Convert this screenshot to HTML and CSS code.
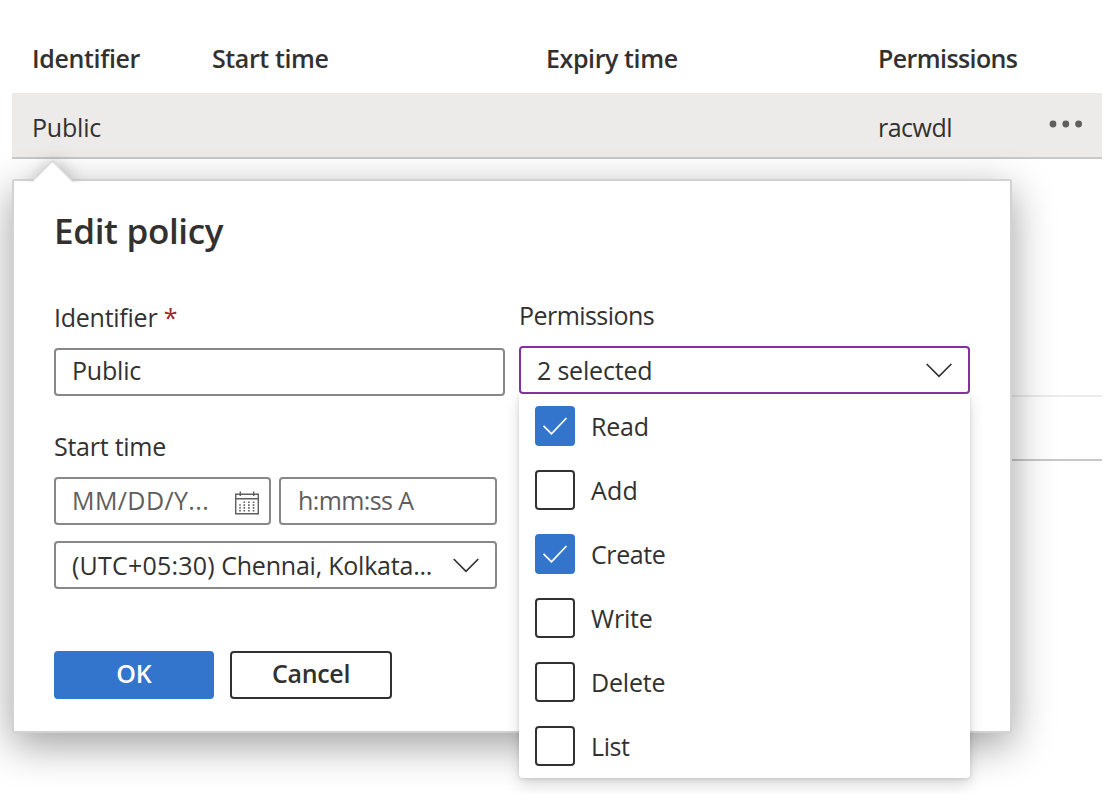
FILE: index.html
```html
<!DOCTYPE html>
<html lang="en">
<head>
<meta charset="utf-8">
<title>Access policies</title>
<link rel="stylesheet" href="styles.css">
</head>
<body>
<main class="policies">
  <div class="table">
    <div class="row head">
      <span class="t-id">Identifier</span><span class="t-start">Start time</span><span class="t-expiry">Expiry time</span><span class="t-perm">Permissions</span>
    </div>
    <div class="row selected">
      <span class="t-public">Public</span><span></span><span></span><span class="t-flags">racwdl</span>
      <svg class="more" viewBox="0 0 34 8"><circle cx="4" cy="4" r="3.4"/><circle cx="16.8" cy="4" r="3.4"/><circle cx="29.6" cy="4" r="3.4"/></svg>
    </div>
    <div class="spacer"></div>
    <div class="row empty"></div>
  </div>

  <section class="callout">
    <svg class="beak" viewBox="0 0 46 24"><path class="beak-fill" d="M1 24 L22.5 2.5 L44 24Z"/><path class="beak-edge" d="M2 22.5 L22.5 2 L43 22.5"/></svg>
    <h1 class="title">Edit policy</h1>
    <div class="form">
      <div class="left">
        <div class="label"><span class="t-label-id">Identifier</span> <span class="required">*</span></div>
        <div class="field name"><span class="t-public">Public</span></div>
        <div class="label start"><span class="t-label-start">Start time</span></div>
        <div class="pair">
          <div class="field hint date"><span class="t-date">MM/DD/Y...</span>
            <svg class="calendar" viewBox="0 0 24 24"><path d="M.7 3.2H23.3V22.8H.7ZM.7 7.7H23.3M5.3 .5V5M18.7 .5V5"/><path class="dots" d="M9.3 10.5V20.5M13.9 10.5V20.5M18.5 10.5V20.5M5 13.2V20.5"/></svg>
          </div>
          <div class="field hint time"><span class="t-time">h:mm:ss A</span></div>
        </div>
        <div class="field zone"><span><span class="t-offset">(UTC+05:30)</span> <span class="t-city">Chennai, Kolkata...</span></span>
          <svg class="chevron" viewBox="0 0 26 15"><path d="M.7 1 L13 13.3 L25.3 1"/></svg>
        </div>
        <div class="actions"><button class="btn primary"><span class="t-ok">OK</span></button><button class="btn"><span class="t-cancel">Cancel</span></button></div>
      </div>
      <div class="right">
        <div class="label"><span class="t-label-perm">Permissions</span></div>
        <div class="field open"><span class="t-count">2 selected</span>
          <svg class="chevron" viewBox="0 0 26 15"><path d="M.7 1 L13 13.3 L25.3 1"/></svg>
        </div>
        <div class="menu">
          <div class="option"><span class="box on"><svg viewBox="0 0 40 40"><path d="M8.5 19.8 L16.5 27.8 L31.5 12"/></svg></span><span class="t-option">Read</span></div>
          <div class="option"><span class="box"></span><span class="t-add">Add</span></div>
          <div class="option"><span class="box on"><svg viewBox="0 0 40 40"><path d="M8.5 19.8 L16.5 27.8 L31.5 12"/></svg></span><span class="t-create">Create</span></div>
          <div class="option"><span class="box"></span><span class="t-option">Write</span></div>
          <div class="option"><span class="box"></span><span class="t-option">Delete</span></div>
          <div class="option"><span class="box"></span><span class="t-create">List</span></div>
        </div>
      </div>
    </div>
  </section>
</main>
</body>
</html>
```
FILE: styles.css
```css
* { box-sizing: border-box; }
body { margin: 0; background: #fff; color: #323130; font: 25px/34px "Open Sans", "Noto Sans", sans-serif; }
.policies { position: relative; width: 1112px; height: 794px; overflow: hidden; }
.policies span { white-space: nowrap; }
.table { padding: 24px 10px 0 12px; }
.row { display: grid; grid-template-columns: 180px 334px 332px 171px 34px; padding-left: 20px; align-items: center; }
.head { height: 69px; padding-bottom: 1px; font-weight: 600; }
.selected { height: 66px; padding-top: 3px; background: #edebe9; border-bottom: 2px solid #c8c8c8; }
.more { width: 34px; height: 8px; margin-top: -6px; fill: #605e5c; }
.spacer { height: 238px; border-bottom: 2px solid #ebebeb; }
.empty { height: 64px; border-bottom: 2px solid #c8c8c8; }

.callout { position: absolute; left: 12px; top: 179px; width: 1000px; height: 554px; padding: 28px 40px; background: #fff; border: 2px solid #d2d2d2; border-radius: 3px 3px 0 0; box-shadow: 0 12px 42px rgba(0,0,0,.38); }
.beak { position: absolute; left: 16px; top: -22px; width: 46px; height: 24px; overflow: visible; filter: drop-shadow(2px 0 8px rgba(0,0,0,.25)); clip-path: inset(-16px -30px 0 -30px); }
.beak-fill { fill: #fff; }
.beak-edge { fill: none; stroke: #d8d8d8; stroke-width: 1.5; }
.title { margin: 0; font-size: 35px; line-height: 44px; font-weight: 600; letter-spacing: -.32px; }
.form { display: grid; grid-template-columns: 451px 451px; column-gap: 14px; padding-top: 45px; }
.left { padding-top: 2px; }
.label { height: 48px; }
.required { color: #a4262c; }
.start { margin-top: 33px; }
.field { display: flex; align-items: center; justify-content: space-between; height: 48px; padding: 0 16px 2px; border: 2px solid #8a8886; border-radius: 4px; background: #fff; }
.name { padding-bottom: 4px; }
.pair { display: grid; grid-template-columns: 217px 218px; gap: 8px; }
.hint { color: #605e5c; }
.date { padding-right: 10px; }
.time { padding-left: 17px; }
.calendar { width: 24px; height: 24px; margin-top: 5px; fill: none; stroke: #605e5c; stroke-width: 1.4; }
.calendar .dots { stroke-width: 1.6; stroke-dasharray: 1.6 1.2; }
.zone { width: 443px; margin-top: 16px; padding-bottom: 0; }
.chevron { width: 26px; height: 15px; fill: none; stroke: #323130; stroke-width: 1.7; }
.actions { display: flex; gap: 16px; margin-top: 62px; }
.btn { width: 162px; height: 48px; padding: 0 0 4px; border: 2px solid #323130; border-radius: 4px; background: #fff; color: #323130; font: 600 25px/34px "Open Sans", "Noto Sans", sans-serif; }
.primary { width: 160px; background: #3375cd; border-color: #3375cd; color: #fff; }
.open { border-color: #8530a0; padding-bottom: 0; }
.menu { position: relative; height: 384px; padding: 0 16px; background: #fff; border-radius: 0 0 4px 4px; box-shadow: 0 7px 15px rgba(0,0,0,.14), 0 1px 4px rgba(0,0,0,.12); clip-path: inset(0 -30px -30px -30px); }
.option { display: flex; align-items: center; gap: 16px; height: 64px; }
.box { width: 40px; height: 40px; border: 2px solid #323130; border-radius: 4px; }
.on { background: #3375cd; border: 0; }
.on svg { display: block; width: 40px; height: 40px; fill: none; stroke: #fff; stroke-width: 1.8; }

/* tracking */
.t-id { letter-spacing: -.35px; }
.t-start, .t-expiry { letter-spacing: -.4px; }
.t-perm { letter-spacing: -.6px; }
.t-public, .t-count, .t-option { letter-spacing: -.2px; }
.t-flags { letter-spacing: -.5px; }
.t-label-id, .t-label-start { letter-spacing: -.25px; }
.t-label-perm { letter-spacing: -.55px; }
.t-date { letter-spacing: .4px; }
.t-time { letter-spacing: -.6px; }
.t-offset { letter-spacing: .2px; }
.t-city { letter-spacing: -.22px; }
.t-add { letter-spacing: .2px; }
.t-create { letter-spacing: -.4px; }
.t-cancel { letter-spacing: -.3px; }
```
